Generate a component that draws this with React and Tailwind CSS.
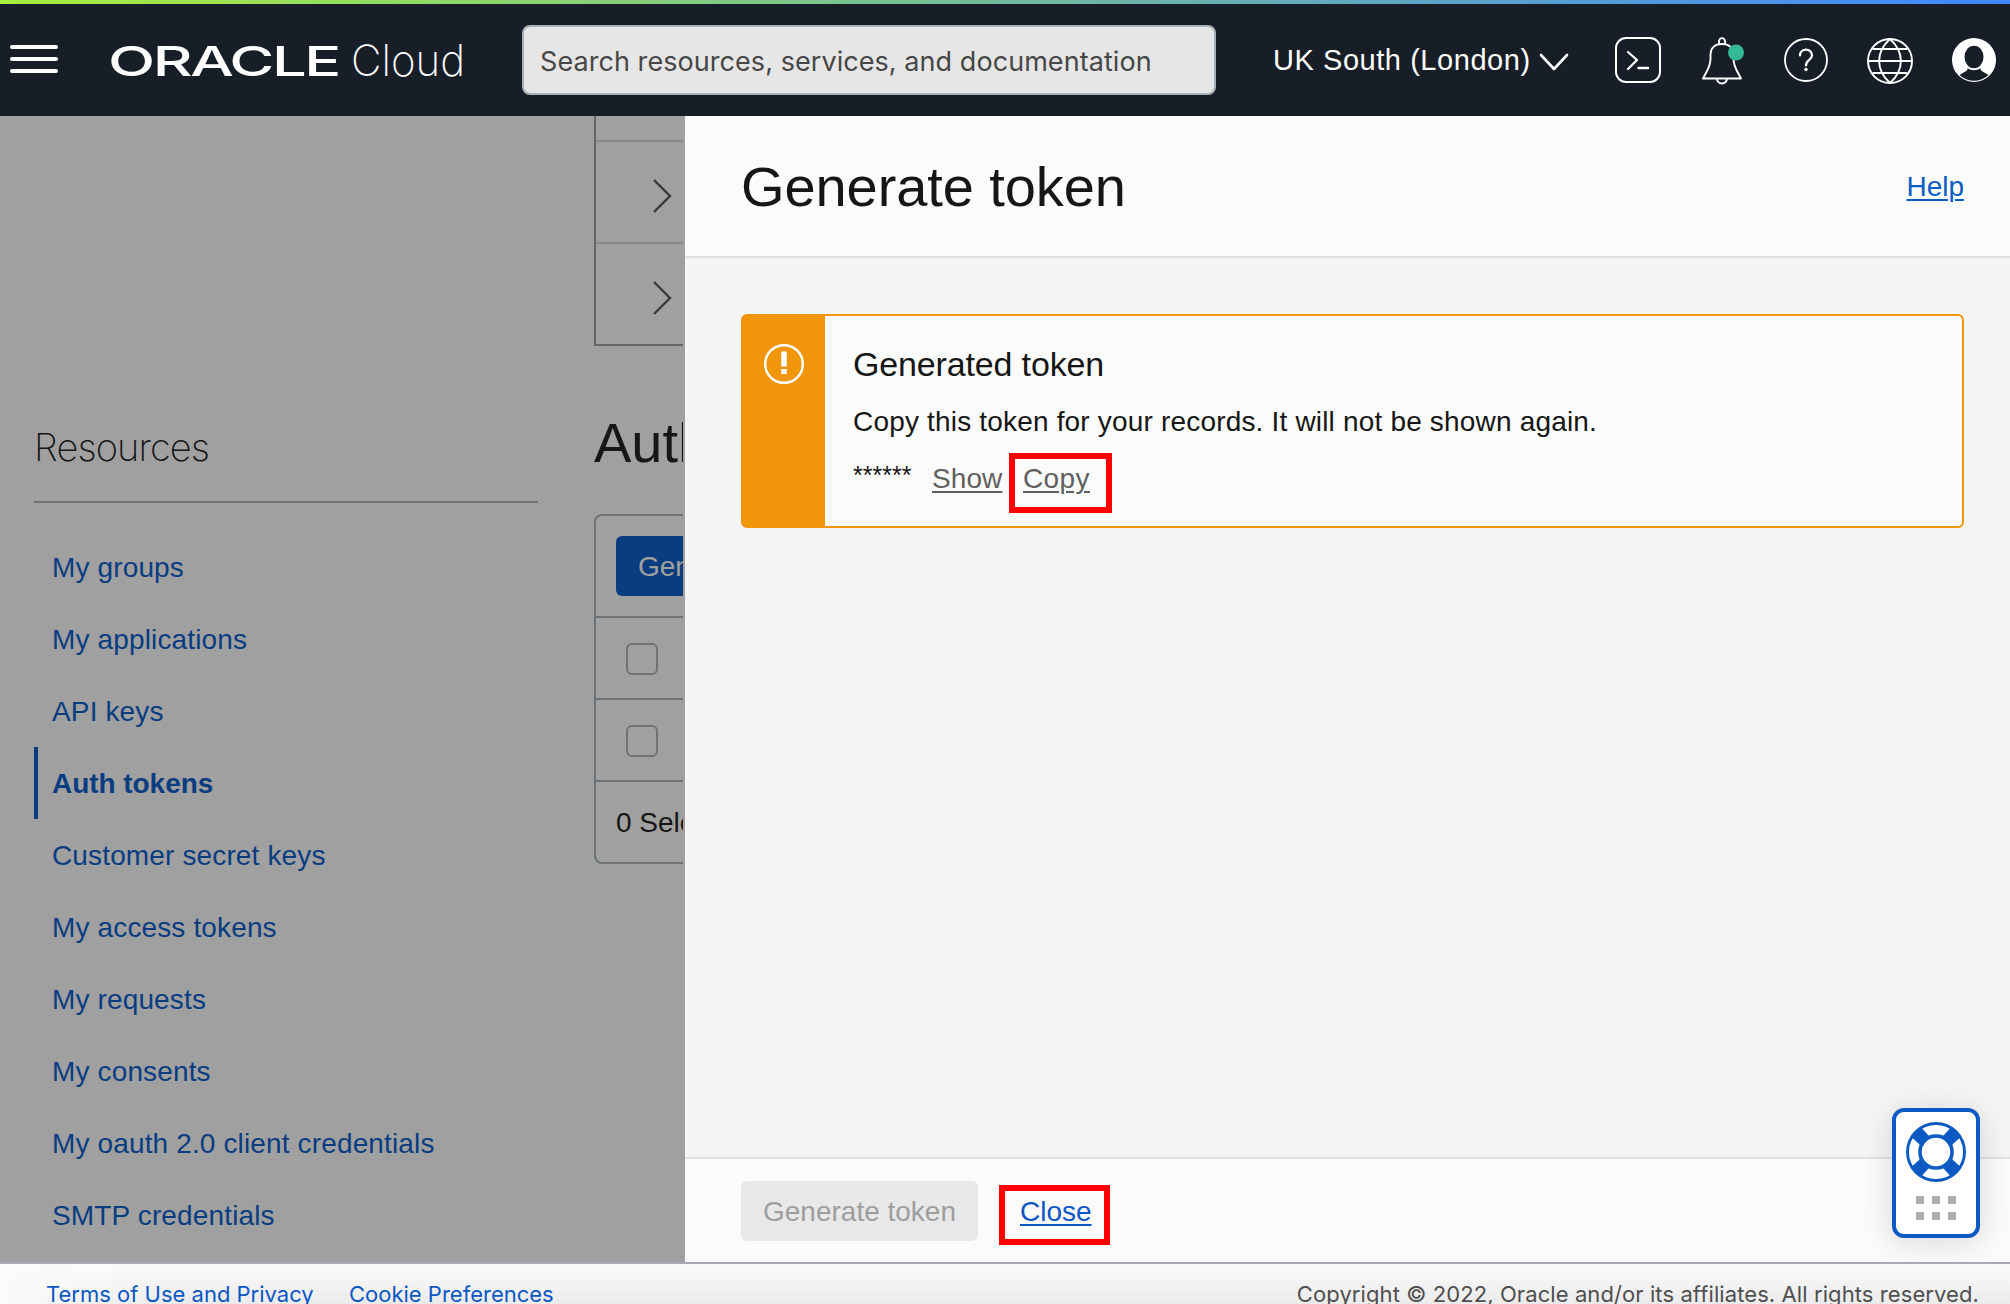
const NAV = [
  'My groups',
  'My applications',
  'API keys',
  'Auth tokens',
  'Customer secret keys',
  'My access tokens',
  'My requests',
  'My consents',
  'My oauth 2.0 client credentials',
  'SMTP credentials',
];

function Logo() {
  return (
    <svg width="360" height="60" viewBox="0 -8 360 60" className="block" fill="#fff">
      <text x="0" y="38" fontFamily="Inter, sans-serif" fontWeight="500" fontSize="41" letterSpacing="-1.6" textLength="231" lengthAdjust="spacingAndGlyphs">ORACLE</text>
      <text x="243" y="37.500" fontFamily="Inter, sans-serif" fontWeight="250" fontSize="43" textLength="114" lengthAdjust="spacingAndGlyphs">Cloud</text>
    </svg>
  );
}

function HeaderIcons() {
  return (
    <div className="flex items-center">
      <svg width="30" height="20" viewBox="0 0 30 20" fill="none" stroke="#fff" strokeWidth="2.6" strokeLinecap="round" strokeLinejoin="round" className="ml-[10px] mt-1">
        <path d="M2 3 L15 17 L28 3" />
      </svg>
      <svg width="46" height="46" viewBox="0 0 46 46" fill="none" stroke="#fff" strokeWidth="2" className="ml-[46px]">
        <rect x="1" y="1" width="44" height="44" rx="10" />
        <path d="M13 15 L22 23 L13 32" strokeLinecap="round" strokeLinejoin="round" strokeWidth="2.2" />
        <path d="M23.5 31 H33" strokeLinecap="round" strokeWidth="2.4" />
      </svg>
      <svg width="46" height="48" viewBox="0 0 46 48" fill="none" stroke="#fff" strokeWidth="1.9" strokeLinejoin="round" className="ml-[40px] mt-[2px]">
        <path d="M18 7 V4.5 a3 3.4 0 0 1 6 0 V7" />
        <path d="M2 41.500 C5.500 34.500 9.500 30 9.500 22 V17.500 C9.500 10.500 14.500 7 21 7 C27.500 7 32.500 10.500 32.500 17.500 V22 C32.500 30 36.500 34.500 40 41.500 Z" />
        <path d="M16 41.500 a5 5 0 0 0 10 0" />
        <circle cx="35" cy="15.500" r="8" fill="#34b896" stroke="none" />
      </svg>
      <svg width="44" height="44" viewBox="0 0 44 44" fill="none" stroke="#fff" className="ml-[37px]">
        <circle cx="22" cy="22" r="21" strokeWidth="1.8" />
        <path d="M16 17.500 C16 9.800 28 9.800 28 17.300 C28 22 22 21.800 22 27.500" strokeWidth="2.2" strokeLinecap="round" />
        <circle cx="22" cy="31.500" r="1.700" fill="#fff" stroke="none" />
      </svg>
      <svg width="46" height="46" viewBox="0 0 46 46" fill="none" stroke="#fff" strokeWidth="1.9" className="ml-[39px] mt-[2px]">
        <circle cx="23" cy="23" r="22" />
        <path d="M23 1 C8.500 14 8.500 32 23 45 C37.500 32 37.500 14 23 1 Z" />
        <path d="M5.500 11 H40.500 M1 23 H45 M5.500 35 H40.500" />
      </svg>
      <svg width="44" height="44" viewBox="0 0 44 44" className="ml-[39px]">
        <circle cx="22" cy="22" r="22" fill="#fff" />
        <ellipse cx="22" cy="19" rx="9.500" ry="11.200" fill="#171e27" />
        <path d="M7.500 37 L14.200 33 Q15.500 32 15.500 30.500 Q22 33.800 28.500 30.500 Q28.500 32 29.800 33 L36.500 37 A20.900 20.900 0 0 1 7.500 37 Z" fill="#171e27" />
      </svg>
    </div>
  );
}

function Header() {
  return (
    <header className="flex h-[116px] shrink-0 flex-col bg-[#171e27] text-white">
      <div className="h-1 shrink-0 bg-[linear-gradient(90deg,#a6ef3c,#3f87ff)]" />
      <div className="flex flex-1 items-center">
        <div className="ml-[10px] flex w-12 flex-col gap-2 -mt-[2px]">
          <span className="h-1 rounded-full bg-white" />
          <span className="h-1 rounded-full bg-white" />
          <span className="h-1 rounded-full bg-white" />
        </div>
        <div className="ml-[50px] w-[414px]">
          <Logo />
        </div>
        <div className="flex h-[70px] w-[694px] items-center rounded-lg border-2 border-[#a7afb7] bg-[#e6e6e6] pl-[16px]">
          <div className="mt-[4px] w-[611px] overflow-hidden whitespace-nowrap font-['Inter',sans-serif] text-[27px] tracking-[0.06px] text-[#474747]">
            Search resources, services, and documentation
          </div>
        </div>
        <div className="ml-[57px] mt-[2px] w-[256px] whitespace-nowrap text-[29px] tracking-[0.55px]">UK South (London)</div>
        <HeaderIcons />
      </div>
    </header>
  );
}

function Chevron() {
  return (
    <svg width="20" height="36" viewBox="0 0 20 36" fill="none" stroke="#3a3a3a" strokeWidth="2.4" className="ml-[56px] mt-2">
      <path d="M2 2 L18 18 L2 34" />
    </svg>
  );
}

function Sidebar() {
  return (
    <aside className="flex w-[560px] shrink-0 flex-col pl-[34px] pt-[304px]">
      <h2 className="flex h-[83px] w-[504px] items-start border-b-2 border-[#6c7378] font-['Inter',sans-serif] text-[38px] font-extralight leading-[54px] tracking-[-0.9px] text-[#161616]">
        Resources
      </h2>
      <nav className="mt-7 flex flex-col text-[28px] leading-[71px] text-[#0a3c80]">
        {NAV.map((n) => (
          <a
            key={n}
            className={
              n === 'Auth tokens'
                ? 'h-[72px] border-l-4 border-[#0a3c80] pl-[14px] pt-px font-bold tracking-[-0.05px]'
                : 'h-[72px] border-l-4 border-transparent pl-[14px] pt-px tracking-[0.14px]'
            }
          >
            {n}
          </a>
        ))}
      </nav>
    </aside>
  );
}

function Underlay() {
  return (
    <div className="flex w-[685px] shrink-0 overflow-hidden bg-[#a0a0a0]">
      <Sidebar />
      <div className="ml-[34px] flex w-[89px] shrink-0 flex-col overflow-hidden whitespace-nowrap">
        <div className="flex h-[230px] shrink-0 flex-col border-b-2 border-l-2 border-[#666]">
          <div className="h-[26px] border-b-2 border-[#87888d]" />
          <div className="flex h-[102px] items-center border-b-2 border-[#87888d]">
            <Chevron />
          </div>
          <div className="flex h-[100px] items-center">
            <Chevron />
          </div>
        </div>
        <h1 className="mt-[64px] h-[64px] shrink-0 text-[56px] leading-[65px] text-[#161616]">Auth tokens</h1>
        <div className="mt-[40px] flex h-[350px] w-[400px] shrink-0 flex-col rounded-lg border-2 border-[#6c7378] text-[28px]">
          <div className="flex h-[102px] items-center border-b-2 border-[#6c7378] pl-5">
            <div className="h-[60px] rounded-md bg-[#0a3c80] px-[22px] leading-[61px] text-[#a0a0a0]">Generate token</div>
          </div>
          {[0, 1].map((i) => (
            <div key={i} className="flex h-[82px] items-center border-b-2 border-[#6c7378] pl-[30px]">
              <span className="mt-[2px] size-8 rounded-md border-2 border-[#6c7378]" />
            </div>
          ))}
          <div className="flex flex-1 items-center pl-5 pt-[2px] text-[#161616]">0 Selected</div>
        </div>
      </div>
    </div>
  );
}

function TokenAlert() {
  return (
    <div className="mx-[56px] mt-[56px] mr-[46px] flex h-[214px] rounded-md border-2 border-[#f1960b] bg-[#f1960b]">
      <div className="flex w-[82px] shrink-0 justify-center pt-[28px]">
        <svg width="40" height="40" viewBox="0 0 40 40">
          <circle cx="20" cy="20" r="18.800" fill="none" stroke="#fff" strokeWidth="2.400" />
          <rect x="17.200" y="7.500" width="5.600" height="15" fill="#fff" />
          <rect x="17.200" y="25" width="5.600" height="5" fill="#fff" />
        </svg>
      </div>
      <div className="flex flex-1 flex-col rounded-r bg-[#fbfbfb] pl-7 pt-5 text-[28px] leading-[57px] text-[#161616]">
        <div className="text-[34px] leading-[57px] tracking-[-0.15px]">Generated token</div>
        <div className="tracking-[0.18px]">Copy this token for your records. It will not be shown again.</div>
        <div className="flex text-[#5f5f5f]">
          <span className="-mt-[3px] w-[79px] text-[25px] text-[#161616]">******</span>
          <a className="w-[91px] tracking-[0.1px] underline decoration-2 underline-offset-[3px]">Show</a>
          <span className="relative">
            <a className="tracking-[0.4px] underline decoration-2 underline-offset-[3px]">Copy</a>
            <span className="absolute left-[-14px] top-[3px] h-[60px] w-[103px] border-[6px] border-[#ff0000]" />
          </span>
        </div>
      </div>
    </div>
  );
}

function Panel() {
  return (
    <section className="flex flex-1 flex-col bg-[#f5f5f5]">
      <div className="flex h-[142px] shrink-0 items-center justify-between border-b-2 border-[#e0e0e0] bg-[#fbfbfb] pl-[56px] pr-[46px]">
        <h1 className="mt-px text-[56px] leading-[64px] tracking-[-0.08px] text-[#161616]">Generate token</h1>
        <a className="mt-[2px] text-[28px] leading-[40px] text-[#0b5cc4] underline decoration-2 underline-offset-[3px]">Help</a>
      </div>
      <TokenAlert />
      <div className="mt-auto flex h-[105px] items-center border-t-2 border-[#e0e0e0] bg-[#fbfbfb] pl-[56px] text-[28px]">
        <button className="h-[60px] w-[237px] rounded-md bg-[#e8e8e8] pt-[2px] text-[#9d9d9d]">Generate token</button>
        <span className="relative ml-[42px] leading-[42px]">
          <a className="relative top-px text-[#0b57c4] underline decoration-2 underline-offset-[3px]">Close</a>
          <span className="absolute left-[-21px] top-[-5px] h-[60px] w-[111px] border-[6px] border-[#ff0000]" />
        </span>
      </div>
    </section>
  );
}

function HelpWidget() {
  return (
    <div className="absolute left-[1892px] top-[1108px] flex h-[130px] w-[88px] flex-col items-center rounded-xl border-4 border-[#0b5ac4] bg-white pt-[10px] shadow-[0_4px_32px_rgba(0,0,0,0.14)]">
      <svg width="60" height="60" viewBox="0 0 60 60">
        <circle cx="30" cy="30" r="30" fill="#0b5ac4" />
        <g fill="#fff">
          {[0, 90, 180, 270].map((a) => (
            <path key={a} d="M16.300 6.700 A27 27 0 0 1 43.700 6.700 L37.500 13.600 Q34 12.200 30 12.200 Q26 12.200 22.500 13.600 Z" transform={`rotate(${a} 30 30)`} />
          ))}
        </g>
        <circle cx="30" cy="30" r="14.300" fill="#fff" />
      </svg>
      <div className="mt-[14px] grid grid-cols-3 gap-2">
        {[0, 1, 2, 3, 4, 5].map((i) => (
          <span key={i} className="size-2 bg-[#a7afb5]" />
        ))}
      </div>
    </div>
  );
}

export default function App() {
  return (
    <div className="relative flex h-[1304px] w-[2010px] flex-col overflow-hidden font-['Liberation_Sans',Arial,sans-serif]">
      <Header />
      <div className="flex h-[1146px] shrink-0">
        <Underlay />
        <Panel />
      </div>
      <HelpWidget />
      <footer className="relative flex h-[42px] shrink-0 overflow-hidden whitespace-nowrap border-t-2 border-[#a5acb5] bg-[linear-gradient(90deg,#fbfbfb,transparent_160px),linear-gradient(180deg,#fbfbfb,#ebebeb)] pl-[46px] pr-[31px] pt-[15px] font-['Inter',sans-serif] text-[22px] leading-[30px]">
        <a className="w-[303px] text-[#0b57c4]">Terms of Use and Privacy</a>
        <a className="text-[#0b57c4]">Cookie Preferences</a>
        <span className="ml-auto tracking-[0.09px] text-[#4f4f4f]">Copyright © 2022, Oracle and/or its affiliates. All rights reserved.</span>
      </footer>
    </div>
  );
}
